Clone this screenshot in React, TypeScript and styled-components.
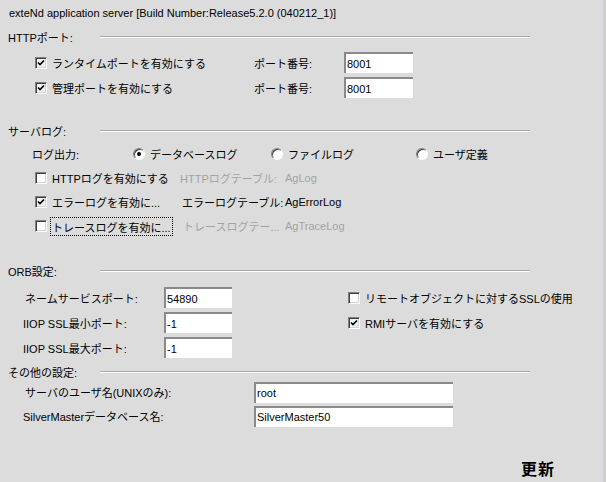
import styled, { createGlobalStyle } from 'styled-components';

const GlobalStyle = createGlobalStyle`
  html, body {
    margin: 0;
    padding: 0;
    background: #dcdcdc;
  }
  * {
    box-sizing: border-box;
  }
`;

const Page = styled.div`
  width: 606px;
  height: 482px;
  overflow: hidden;
  background: #dcdcdc;
  border-right: 3px solid #d0d0c8;
  font-family: "Liberation Sans", "Noto Sans CJK JP", sans-serif;
  font-size: 11px;
  color: #000;
  display: flex;
  flex-direction: column;
`;

const Title = styled.div`
  height: 20px;
  margin-top: 3px;
  padding-left: 9px;
  display: flex;
  align-items: center;
  white-space: nowrap;
`;

const SectionHeader = styled.div<{ $gap: number }>`
  height: 16px;
  margin-top: ${({ $gap }) => $gap}px;
  padding-left: 8px;
  display: grid;
  grid-template-columns: 92px 430px;
  align-items: center;
`;

const Groove = styled.div`
  height: 2px;
  border-top: 1px solid #a8a8a8;
  border-bottom: 1px solid #ffffff;
`;

const Rows = styled.div<{ $gap: number }>`
  margin-top: ${({ $gap }) => $gap}px;
  display: flex;
  flex-direction: column;
`;

const Row = styled.div<{ $cols: string; $pad: number; $h: number }>`
  height: ${({ $h }) => $h}px;
  padding-left: ${({ $pad }) => $pad}px;
  display: grid;
  grid-template-columns: ${({ $cols }) => $cols};
  align-items: center;
  white-space: nowrap;
`;

const Text = styled.span<{ $disabled?: boolean }>`
  color: ${({ $disabled }) => ($disabled ? '#a3a3a3' : '#000')};
  white-space: nowrap;
  overflow: visible;
`;

const Option = styled.label`
  display: flex;
  align-items: center;
  gap: 5px;
  white-space: nowrap;
`;

const Box = styled.span<{ $checked?: boolean }>`
  width: 12px;
  height: 12px;
  flex: none;
  display: inline-flex;
  align-items: center;
  justify-content: center;
  background: ${({ $checked }) => ($checked ? '#f2f2f2' : '#ffffff')};
  border: 1px solid;
  border-color: #808080 #ffffff #ffffff #808080;
  box-shadow: inset 1px 1px 0 #404040, inset -1px -1px 0 #d4d4d4;
`;

const Radio = styled.span<{ $selected?: boolean }>`
  width: 12px;
  height: 12px;
  flex: none;
  border-radius: 50%;
  background: #ffffff;
  border: 1px solid;
  border-color: #808080 #ffffff #ffffff #808080;
  box-shadow: inset 1px 1px 0 #404040;
  display: inline-flex;
  align-items: center;
  justify-content: center;

  &::after {
    content: '';
    width: 4px;
    height: 4px;
    border-radius: 50%;
    background: ${({ $selected }) => ($selected ? '#000' : 'transparent')};
  }
`;

const Focus = styled.span`
  padding: 1px 1px 0;
  border: 1px dotted #000;
  margin-left: -2px;
`;

const Field = styled.div<{ $w: number }>`
  width: ${({ $w }) => $w}px;
  height: 21px;
  background: #ffffff;
  border-top: 2px solid #8a8a8a;
  border-left: 2px solid #8a8a8a;
  padding-left: 1px;
  display: flex;
  align-items: center;
  font-family: "Liberation Sans", sans-serif;
  font-size: 11px;
`;

const Footer = styled.div`
  margin-top: 30px;
  height: 20px;
  padding-left: 521px;
  display: flex;
  align-items: center;
`;

const UpdateButton = styled.span`
  font-family: "Noto Sans CJK JP", sans-serif;
  font-weight: 700;
  font-size: 16px;
  letter-spacing: 1px;
`;

const Check = ({ checked }: { checked?: boolean }) => (
  <Box $checked={checked}>
    {checked && (
      <svg width="8" height="8" viewBox="0 0 8 8">
        <path d="M1 3.5 L3 5.5 L7 1.5" stroke="#000" strokeWidth="1.6" fill="none" />
      </svg>
    )}
  </Box>
);

export default function App() {
  return (
    <>
      <GlobalStyle />
      <Page>
        <Title>exteNd application server [Build Number:Release5.2.0 (040212_1)]</Title>

        <SectionHeader $gap={6}>
          <Text>HTTPポート:</Text>
          <Groove />
        </SectionHeader>
        <Rows $gap={5}>
          <Row $pad={35} $h={25} $cols="219px 90px 69px">
            <Option><Check checked /><Text>ランタイムポートを有効にする</Text></Option>
            <Text>ポート番号:</Text>
            <Field $w={69}>8001</Field>
          </Row>
          <Row $pad={35} $h={25} $cols="219px 90px 69px">
            <Option><Check checked /><Text>管理ポートを有効にする</Text></Option>
            <Text>ポート番号:</Text>
            <Field $w={69}>8001</Field>
          </Row>
        </Rows>

        <SectionHeader $gap={23}>
          <Text>サーバログ:</Text>
          <Groove />
        </SectionHeader>
        <Rows $gap={3}>
          <Row $pad={32} $h={24} $cols="101px 138px 145px auto">
            <Text>ログ出力:</Text>
            <Option><Radio $selected /><Text>データベースログ</Text></Option>
            <Option><Radio /><Text>ファイルログ</Text></Option>
            <Option><Radio /><Text>ユーザ定義</Text></Option>
          </Row>
          <Row $pad={35} $h={24} $cols="145px 105px auto">
            <Option><Check /><Text>HTTPログを有効にする</Text></Option>
            <Text $disabled>HTTPログテーブル:</Text>
            <Text $disabled>AgLog</Text>
          </Row>
          <Row $pad={35} $h={24} $cols="147px 103px auto">
            <Option><Check checked /><Text>エラーログを有効に...</Text></Option>
            <Text>エラーログテーブル:</Text>
            <Text>AgErrorLog</Text>
          </Row>
          <Row $pad={35} $h={24} $cols="148px 102px auto">
            <Option><Check /><Focus>トレースログを有効に...</Focus></Option>
            <Text $disabled>トレースログテー...</Text>
            <Text $disabled>AgTraceLog</Text>
          </Row>
        </Rows>

        <SectionHeader $gap={25}>
          <Text>ORB設定:</Text>
          <Groove />
        </SectionHeader>
        <Rows $gap={6}>
          <Row $pad={25} $h={25} $cols="139px 68px 116px auto">
            <Text>ネームサービスポート:</Text>
            <Field $w={68}>54890</Field>
            <span />
            <Option><Check /><Text>リモートオブジェクトに対するSSLの使用</Text></Option>
          </Row>
          <Row $pad={23} $h={25} $cols="141px 68px 116px auto">
            <Text>IIOP SSL最小ポート:</Text>
            <Field $w={68}>-1</Field>
            <span />
            <Option><Check checked /><Text>RMIサーバを有効にする</Text></Option>
          </Row>
          <Row $pad={23} $h={25} $cols="141px 68px">
            <Text>IIOP SSL最大ポート:</Text>
            <Field $w={68}>-1</Field>
          </Row>
        </Rows>

        <SectionHeader $gap={4}>
          <Text>その他の設定:</Text>
          <Groove />
        </SectionHeader>
        <Rows $gap={0}>
          <Row $pad={25} $h={24} $cols="229px 199px">
            <Text>サーバのユーザ名(UNIXのみ):</Text>
            <Field $w={199}>root</Field>
          </Row>
          <Row $pad={23} $h={24} $cols="231px 199px">
            <Text>SilverMasterデータベース名:</Text>
            <Field $w={199}>SilverMaster50</Field>
          </Row>
        </Rows>

        <Footer>
          <UpdateButton>更新</UpdateButton>
        </Footer>
      </Page>
    </>
  );
}
